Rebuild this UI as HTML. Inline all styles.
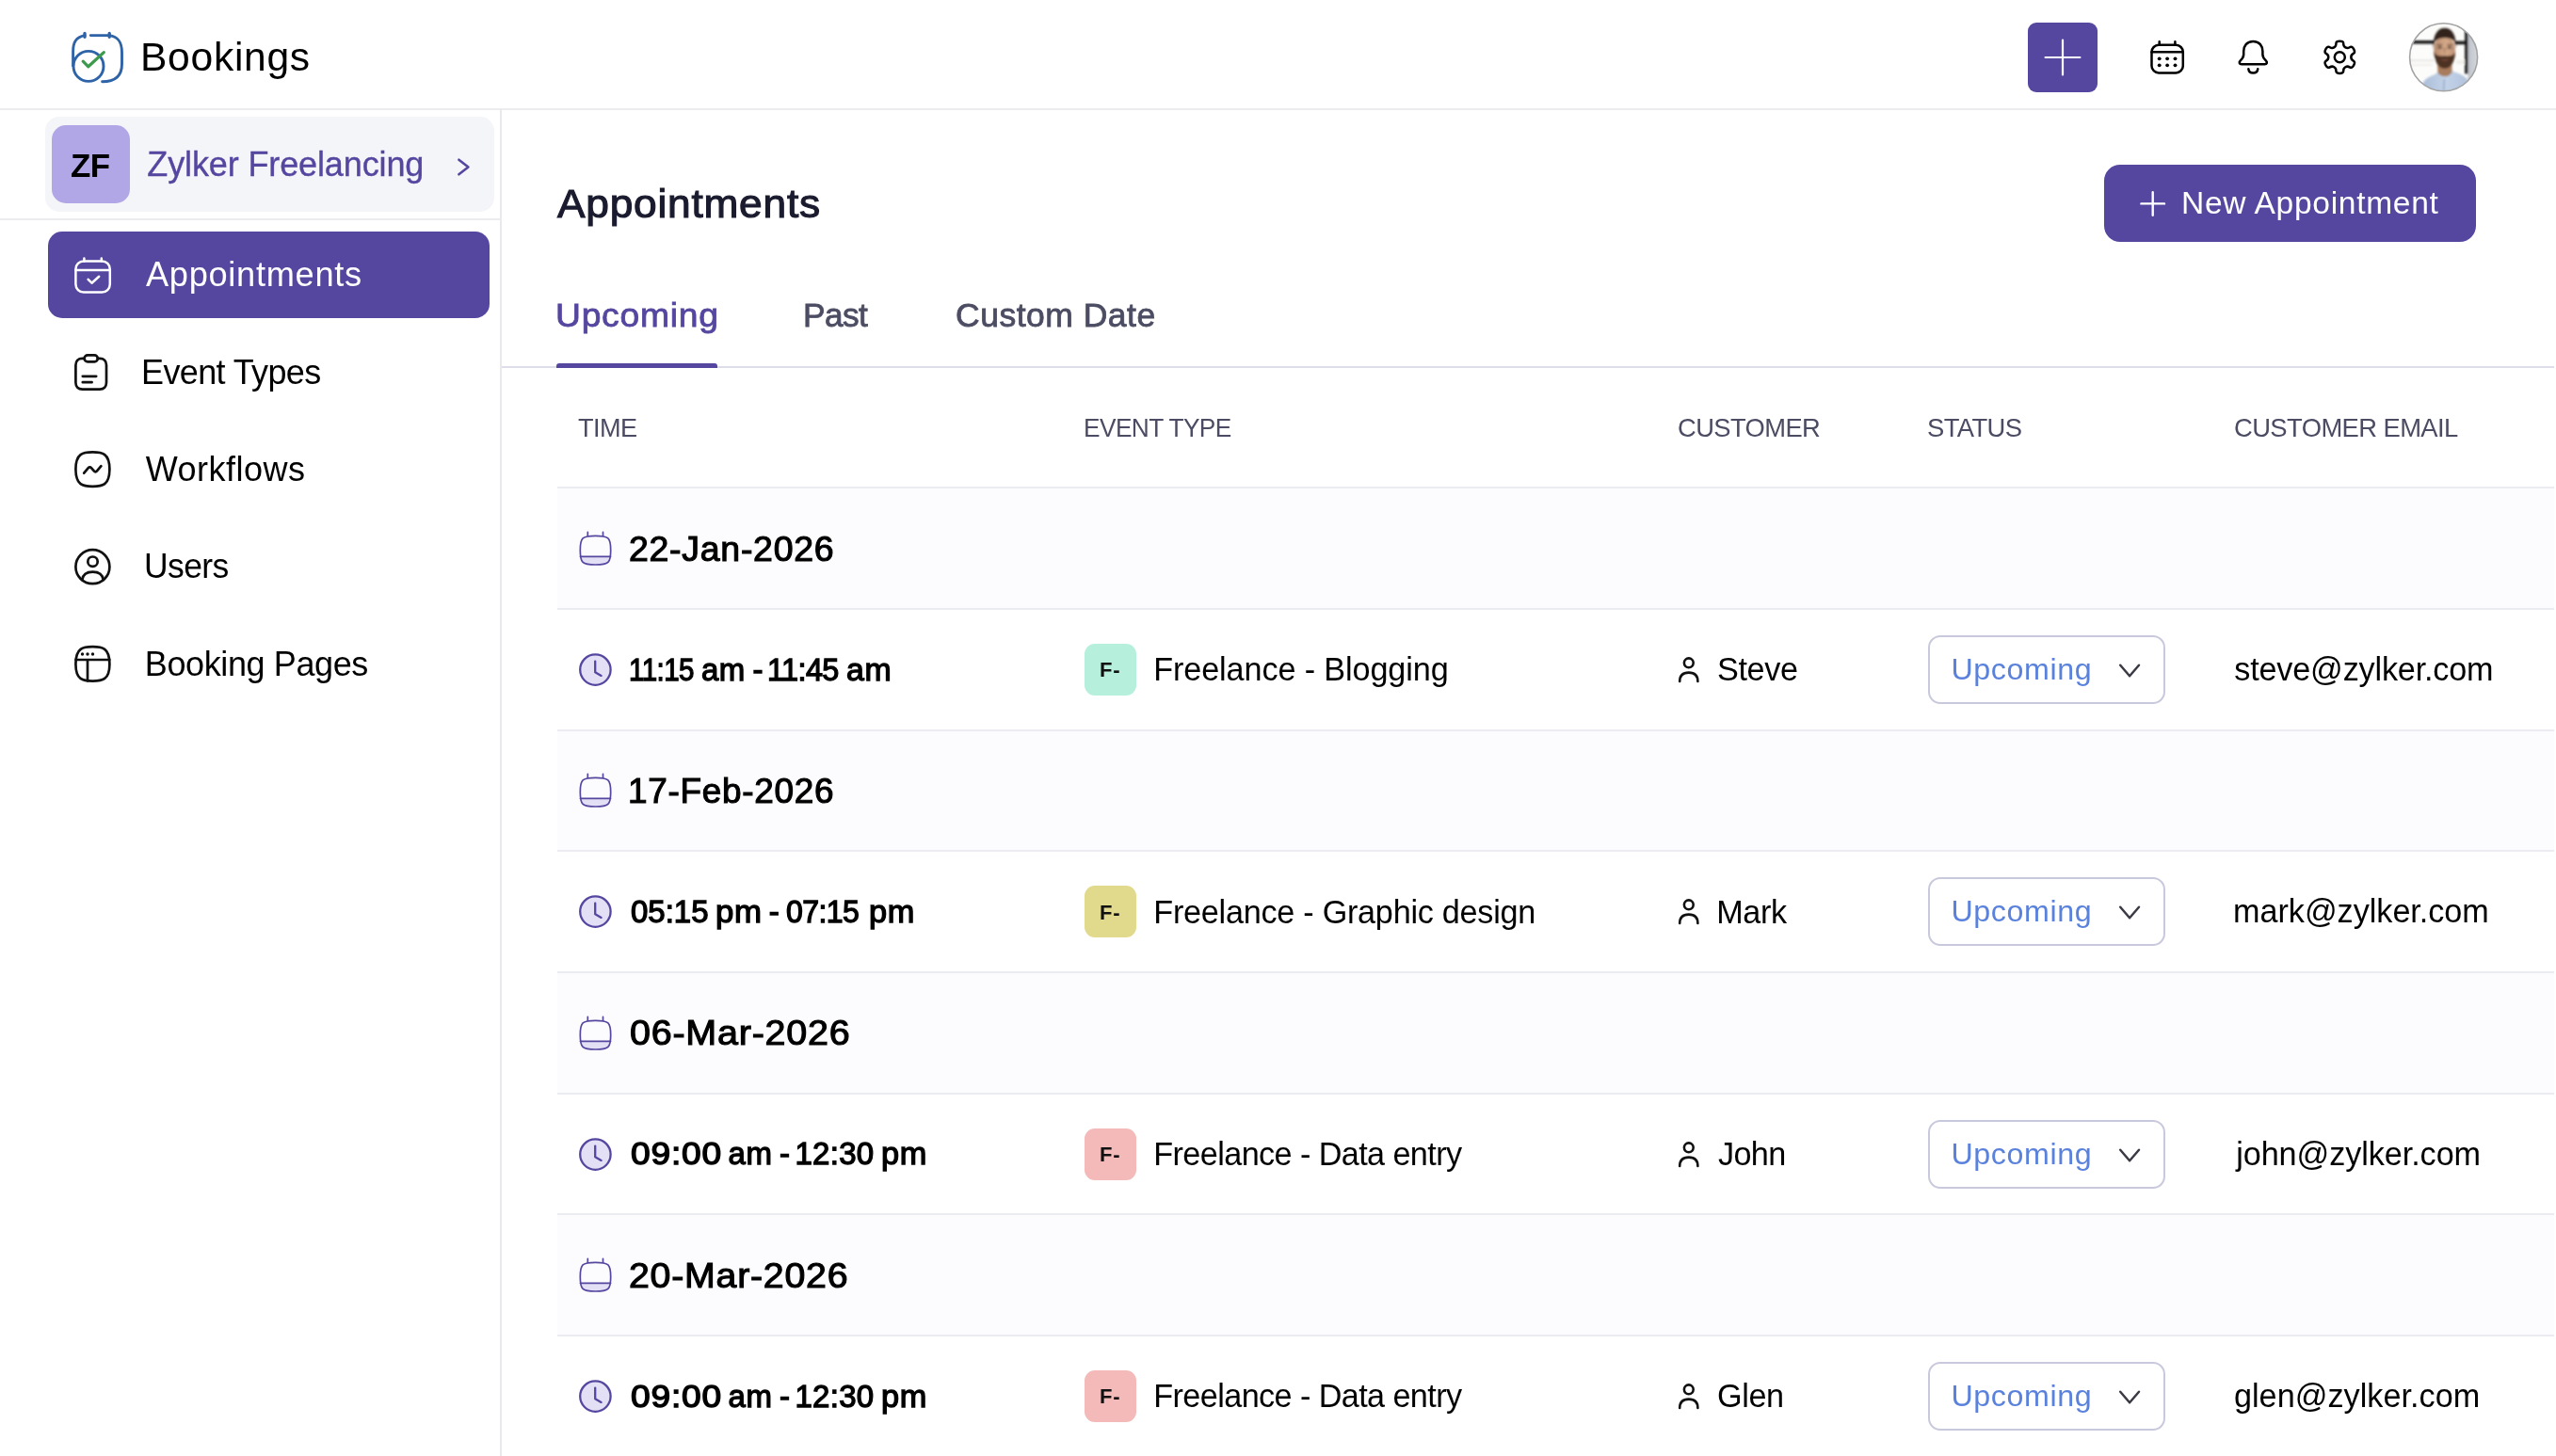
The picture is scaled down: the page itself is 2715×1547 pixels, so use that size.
<!DOCTYPE html><html lang="en"><head><meta charset="utf-8"><title>Bookings - Appointments</title><style>
*{box-sizing:border-box;margin:0;padding:0}
html,body{width:2715px;height:1547px;overflow:hidden;background:#fff}
body{position:relative;font-family:"Liberation Sans",sans-serif;color:#000}
.t{position:absolute;white-space:pre;line-height:1;display:block}
.a{position:absolute;display:block}
.g{position:absolute;left:0;top:0;width:0;height:0}
svg{position:absolute;overflow:visible}
</style></head><body><div id="app" style="position:absolute;left:0;top:0;width:2715px;height:1547px;will-change:transform">
<header class="g">
<div class="a" style="left:0;top:115.200px;width:2715px;height:2px;background:#ececef"></div>
<svg style="left:70px;top:28px" width="68" height="66" viewBox="70 28 68 66" fill="none" stroke-linecap="round" stroke-linejoin="round">
<path d="M90 37.600C80.500 39.500 77.600 45 77.600 55V70" stroke="#2f63a8" stroke-width="2.900"/>
<path d="M96.2 37.6H116.2C126 39 129.5 45 129.5 56V68C129.5 81 122 86.8 108.6 86.8" stroke="#2f63a8" stroke-width="2.900"/>
<path d="M90 35.400V39.300M116.200 35.400V39.300" stroke="#2f63a8" stroke-width="3.400"/>
<circle cx="94" cy="70.400" r="16" stroke="#2f63a8" stroke-width="2.900"/>
<path d="M88.2 65.2L93.8 70.8L110.3 55.6" stroke="#3c9a4c" stroke-width="3.200"/>
</svg>
<span class="t" style="left:149.09px;top:40.05px;font-size:42px;letter-spacing:0.700px;color:#000;transform:scaleX(1.0139);transform-origin:0 0;">Bookings</span>
<div class="a" style="left:2154px;top:24px;width:74px;height:74px;border-radius:9px;background:#5546a0"></div>
<svg style="left:2154px;top:24px" width="74" height="74" viewBox="0 0 74 74" fill="none" stroke="#fff" stroke-width="2.2" stroke-linecap="round"><path d="M37 18.6V55.4M18.6 37H55.4"/></svg>
<svg style="left:2280px;top:40px" width="44" height="44" viewBox="2280 40 44 44" fill="none" stroke="#000" stroke-width="2.5" stroke-linecap="round" stroke-linejoin="round">
<rect x="2285.5" y="47.8" width="33.3" height="29.6" rx="7.5"/>
<path d="M2285.5 55.2H2318.8M2293.7 44.2V47.8M2310.4 44.2V47.8"/>
<g fill="#000" stroke="none"><circle cx="2293.7" cy="62.3" r="1.9"/><circle cx="2302.1" cy="62.3" r="1.9"/><circle cx="2310.5" cy="62.3" r="1.9"/><circle cx="2293.7" cy="69.3" r="1.9"/><circle cx="2302.1" cy="69.3" r="1.9"/><circle cx="2310.5" cy="69.3" r="1.9"/></g>
</svg>
<svg style="left:2372px;top:38px" width="44" height="46" viewBox="2372 38 44 46" fill="none" stroke="#000" stroke-width="2.5" stroke-linecap="round" stroke-linejoin="round">
<path d="M2393.3 44C2386.5 44 2383.2 49 2383.2 54.5V58C2383.2 61 2381.5 62.8 2379.6 64.6C2378 66.2 2378.6 68.2 2381 68.2H2405.6C2408 68.2 2408.6 66.2 2407 64.6C2405.1 62.8 2403.4 61 2403.4 58V54.5C2403.4 49 2400.1 44 2393.3 44Z"/>
<path d="M2388.3 73.2C2388.6 76 2390.6 77.6 2393.3 77.6C2396 77.6 2398 76 2398.3 73.2"/>
</svg>
<svg style="left:2463px;top:38px" width="46" height="46" viewBox="2463 38 46 46" fill="none" stroke="#000" stroke-width="2.5" stroke-linejoin="round">
<path d="M2479.28 50.38Q2481.50 49.10 2481.39 46.38Q2481.28 43.67 2485.30 43.67Q2489.32 43.67 2489.21 46.38Q2489.10 49.10 2491.32 50.38Q2493.53 51.66 2495.83 50.21Q2498.13 48.75 2500.14 52.23Q2502.15 55.71 2499.74 56.98Q2497.33 58.24 2497.33 60.80Q2497.33 63.36 2499.74 64.62Q2502.15 65.89 2500.14 69.37Q2498.13 72.85 2495.83 71.39Q2493.53 69.94 2491.32 71.22Q2489.10 72.50 2489.21 75.22Q2489.32 77.93 2485.30 77.93Q2481.28 77.93 2481.39 75.22Q2481.50 72.50 2479.28 71.22Q2477.07 69.94 2474.77 71.39Q2472.47 72.85 2470.46 69.37Q2468.45 65.89 2470.86 64.62Q2473.27 63.36 2473.27 60.80Q2473.27 58.24 2470.86 56.98Q2468.45 55.71 2470.46 52.23Q2472.47 48.75 2474.77 50.21Q2477.07 51.66 2479.28 50.38Z"/><circle cx="2485.3" cy="60.8" r="5.5"/></svg>
<svg style="left:2558px;top:23px" width="76" height="76" viewBox="2558 23 76 76">
<defs><clipPath id="av"><circle cx="2595.600" cy="60.800" r="36"/></clipPath>
<filter id="bl" x="-20%" y="-20%" width="140%" height="140%"><feGaussianBlur stdDeviation="0.800"/></filter>
<linearGradient id="sk" x1="0" y1="0" x2="1" y2="0"><stop offset="0" stop-color="#b98a6c"/><stop offset="0.550" stop-color="#d3a888"/><stop offset="1" stop-color="#c09274"/></linearGradient>
<linearGradient id="sh" x1="0" y1="0" x2="1" y2="0"><stop offset="0" stop-color="#a9bcd8"/><stop offset="0.500" stop-color="#c3d3e8"/><stop offset="1" stop-color="#aebfda"/></linearGradient>
<linearGradient id="wl" x1="0" y1="0" x2="1" y2="0"><stop offset="0" stop-color="#bfc3ca"/><stop offset="1" stop-color="#dcdfe3"/></linearGradient></defs>
<g clip-path="url(#av)"><rect x="2558" y="23" width="76" height="76" fill="#fcfcfb"/>
<g filter="url(#bl)">
<rect x="2558" y="63" width="28" height="2.500" fill="#ecebe8"/><rect x="2558" y="68" width="26" height="2" fill="#f0efec"/>
<rect x="2609" y="64" width="10" height="4" fill="#f1efe9"/>
<rect x="2621.400" y="23" width="14" height="76" fill="url(#wl)"/>
<rect x="2562" y="43" width="23" height="3.500" fill="#161616"/><rect x="2608" y="43.600" width="12" height="3.600" fill="#161616"/>
<rect x="2618.200" y="31" width="3.300" height="47.500" fill="#121212"/>
<path d="M2571 99L2573 90C2575 84 2580 81.500 2586.500 79L2590 76.500L2604 74.500L2607 76.500C2614 78.500 2620 81 2622.500 88L2625 99Z" fill="url(#sh)"/>
<path d="M2589 69H2604.500V76.500C2602 82.500 2594.500 83 2589.500 77.500Z" fill="#a87b5c"/>
<path d="M2596.500 84L2595.500 99" stroke="#8da2c4" stroke-width="1.200" fill="none"/>
<ellipse cx="2596.600" cy="53.500" rx="11.300" ry="15.800" fill="url(#sk)"/>
<path d="M2584.600 52C2583.800 37 2589.500 29.800 2596.600 29.800C2604.500 29.800 2609.600 37 2608.600 52L2607 44C2604.500 39 2589.500 38.500 2586.300 44.500Z" fill="#30231e"/>
<path d="M2585.300 54C2585.600 65.500 2590 72.800 2596.800 72.800C2603.700 72.800 2607.800 65.500 2608.200 54C2606.500 59.500 2603.500 59.800 2596.800 59.200C2590.500 59.800 2587.300 59.500 2585.300 54Z" fill="#4b3024"/>
<path d="M2592.300 62.300C2595 64 2599 64 2601.500 62.300C2600 65.500 2594 65.500 2592.300 62.300Z" fill="#8c4e48"/>
<ellipse cx="2591.600" cy="50.600" rx="2" ry="1" fill="#4a382f"/><ellipse cx="2601.800" cy="50.600" rx="2" ry="1" fill="#4a382f"/>
<path d="M2588.600 47.800H2594.200M2599.400 47.800H2604.800" stroke="#3b2a22" stroke-width="0.900" fill="none"/>
<path d="M2587 51.500H2606.500" stroke="#7d6a5d" stroke-width="0.700" fill="none" opacity="0.700"/>
<path d="M2596.800 51V57" stroke="#b08262" stroke-width="1.300" fill="none"/>
</g></g>
<circle cx="2595.600" cy="60.800" r="36" fill="none" stroke="#a4a4a4" stroke-width="1.600"/></svg>
</header>
<nav class="g">
<div class="a" style="left:531.100px;top:116px;width:2px;height:1431px;background:#e9e9ed"></div>
<div class="a" style="left:0;top:232.100px;width:532px;height:2px;background:#ececef"></div>
<div class="a" style="left:48px;top:124px;width:477px;height:101px;border-radius:15px;background:#f4f5f9"></div>
<div class="a" style="left:55px;top:133px;width:83px;height:83px;border-radius:15px;background:#b1a6e6"></div>
<span class="t" style="left:75.15px;top:157.57px;font-size:35px;letter-spacing:-0.600px;color:#000;font-weight:700;transform:scaleX(0.9969);transform-origin:0 0;">ZF</span>
<span class="t" style="left:156.29px;top:156.73px;font-size:36px;letter-spacing:-0.119px;color:#5546a0;-webkit-text-stroke:0.35px #5546a0;">Zylker Freelancing</span>
<svg style="left:480px;top:160px" width="26" height="32" viewBox="480 160 26 32" fill="none" stroke="#5546a0" stroke-width="2.6" stroke-linecap="round" stroke-linejoin="round"><path d="M487.400 169.700L497.400 177.500L487.400 185.300"/></svg>
<div class="a" style="left:51px;top:246.200px;width:468.600px;height:91.800px;border-radius:15px;background:#5546a0"></div>
<svg style="left:74px;top:268px" width="50" height="50" viewBox="74 268 50 50" fill="none" stroke="#fff" stroke-width="2.500" stroke-linecap="round" stroke-linejoin="round">
<rect x="80.400" y="277.400" width="36.400" height="33.200" rx="8.500"/><path d="M80.400 287H116.800M89.400 274.400V277.400M107.800 274.400V277.400M93.600 296.800L97.500 300.700L105.200 293.800"/></svg>
<span class="t" style="left:154.82px;top:274.33px;font-size:36px;letter-spacing:0.700px;color:#fff;transform:scaleX(1.0057);transform-origin:0 0;">Appointments</span>
<svg style="left:74px;top:370px" width="50" height="50" viewBox="74 370 50 50" fill="none" stroke="#111" stroke-width="2.7" stroke-linecap="round" stroke-linejoin="round">
<path d="M89.600 380.900H87.400C83.200 380.900 80.400 383.700 80.400 387.900V406.600C80.400 410.800 83.200 413.600 87.400 413.600H106C110.200 413.600 113 410.800 113 406.600V387.900C113 383.700 110.200 380.900 106 380.900H103.800"/>
<rect x="89.600" y="377.400" width="14.200" height="7" rx="3.500"/><path d="M87.800 399.800H102.200M87.800 406.200H97.600"/></svg>
<span class="t" style="left:150.02px;top:377.53px;font-size:36px;letter-spacing:-0.600px;color:#000;transform:scaleX(0.9988);transform-origin:0 0;">Event Types</span>
<svg style="left:74px;top:474px" width="50" height="50" viewBox="74 474 50 50" fill="none" stroke="#111" stroke-width="2.7" stroke-linecap="round" stroke-linejoin="round">
<path d="M98.400 480.400C108.500 480.400 116.400 481.500 116.400 498.600C116.400 515.700 108.500 516.800 98.400 516.800C88.300 516.800 80.400 515.700 80.400 498.600C80.400 481.500 88.300 480.400 98.400 480.400Z"/>
<path d="M89.200 502.600L93.800 497.200C94.800 496 96 496 97 497.200L99.800 500.400C100.800 501.600 102 501.600 103 500.400L107.400 495.200"/></svg>
<span class="t" style="left:154.82px;top:480.93px;font-size:36px;letter-spacing:0.478px;color:#000;">Workflows</span>
<svg style="left:74px;top:578px" width="50" height="50" viewBox="74 578 50 50" fill="none" stroke="#111" stroke-width="2.7" stroke-linecap="round" stroke-linejoin="round">
<circle cx="98.400" cy="602.200" r="18"/><circle cx="98.500" cy="596.700" r="5.200"/>
<path d="M87.200 616.200C88 610.500 92.500 607.600 98.500 607.600C104.500 607.600 109 610.500 109.800 616.200"/></svg>
<span class="t" style="left:152.84px;top:584.33px;font-size:36px;letter-spacing:-0.600px;color:#000;transform:scaleX(0.9852);transform-origin:0 0;">Users</span>
<svg style="left:74px;top:681px" width="50" height="50" viewBox="74 681 50 50" fill="none" stroke="#111" stroke-width="2.7" stroke-linecap="round" stroke-linejoin="round">
<path d="M98.400 687.200C108.500 687.200 116.400 688.300 116.400 705.400C116.400 722.500 108.500 723.600 98.400 723.600C88.300 723.600 80.400 722.500 80.400 705.400C80.400 688.300 88.300 687.200 98.400 687.200Z"/>
<path d="M80.600 701H116.200M93 701V723.400"/><g fill="#111" stroke="none"><circle cx="87.500" cy="695" r="1.700"/><circle cx="93" cy="695" r="1.700"/><circle cx="98.500" cy="695" r="1.700"/></g></svg>
<span class="t" style="left:153.82px;top:687.73px;font-size:36px;letter-spacing:-0.388px;color:#000;">Booking Pages</span>
</nav>
<main class="g">
<span class="t" style="left:592.36px;top:195.85px;font-size:42px;letter-spacing:0.700px;color:#1b1b2f;-webkit-text-stroke:1.1px #1b1b2f;transform:scaleX(1.0551);transform-origin:0 0;">Appointments</span>
<div class="a" style="left:2234.500px;top:174.600px;width:395.600px;height:82.700px;border-radius:17px;background:#5546a0"></div>
<svg style="left:2270px;top:200px" width="34" height="34" viewBox="2270 200 34 34" fill="none" stroke="#fff" stroke-width="2.4" stroke-linecap="round"><path d="M2286.700 204.100V228.700M2274.400 216.400H2299"/></svg>
<span class="t" style="left:2317.11px;top:199.04px;font-size:33.5px;letter-spacing:0.700px;color:#fff;transform:scaleX(1.0021);transform-origin:0 0;">New Appointment</span>
<span class="t" style="left:590.03px;top:318.15px;font-size:35.5px;letter-spacing:0.700px;color:#5546a0;-webkit-text-stroke:0.8px #5546a0;transform:scaleX(1.0494);transform-origin:0 0;">Upcoming</span>
<span class="t" style="left:853.08px;top:318.15px;font-size:35.5px;letter-spacing:-0.600px;color:#4c4c63;-webkit-text-stroke:0.8px #4c4c63;transform:scaleX(0.9928);transform-origin:0 0;">Past</span>
<span class="t" style="left:1015.12px;top:318.15px;font-size:35.5px;letter-spacing:0.493px;color:#4c4c63;-webkit-text-stroke:0.8px #4c4c63;">Custom Date</span>
<div class="a" style="left:533px;top:388.500px;width:2180px;height:2px;background:#dedeea"></div>
<div class="a" style="left:591px;top:386.200px;width:171px;height:4.400px;border-radius:3px 3px 0 0;background:#5546a0"></div>
<span class="t" style="left:614.16px;top:441.02px;font-size:27.5px;letter-spacing:-0.600px;color:#4b4b63;transform:scaleX(0.9865);transform-origin:0 0;">TIME</span>
<span class="t" style="left:1150.50px;top:441.02px;font-size:27.5px;letter-spacing:-0.600px;color:#4b4b63;transform:scaleX(0.9548);transform-origin:0 0;">EVENT TYPE</span>
<span class="t" style="left:1781.53px;top:441.02px;font-size:27.5px;letter-spacing:-0.600px;color:#4b4b63;transform:scaleX(0.9944);transform-origin:0 0;">CUSTOMER</span>
<span class="t" style="left:2047.17px;top:441.02px;font-size:27.5px;letter-spacing:-0.600px;color:#4b4b63;transform:scaleX(0.9971);transform-origin:0 0;">STATUS</span>
<span class="t" style="left:2372.63px;top:441.02px;font-size:27.5px;letter-spacing:-0.600px;color:#4b4b63;transform:scaleX(0.9960);transform-origin:0 0;">CUSTOMER EMAIL</span>
<section class="g">
<div class="a" style="left:592px;top:518.0px;width:2121px;height:128.7px;background:#fcfcfe"></div>
<div class="a" style="left:592px;top:517.2px;width:2121px;height:2px;background:#ebebf2"></div>
<div class="a" style="left:592px;top:645.9px;width:2121px;height:2px;background:#ebebf2"></div>
<svg style="left:612px;top:560.0px" width="42" height="44" viewBox="612 42 42 44" fill="none" stroke="#5546a0" stroke-width="1.7" stroke-linecap="round" stroke-linejoin="round">
<path d="M616.300 73.300H648.700C648.700 80.500 646.500 82 632.500 82C618.500 82 616.300 80.500 616.300 73.300Z" fill="#e3e0f6" stroke="none"/>
<path d="M632.500 51.300C646.500 51.300 648.700 53.300 648.700 66.650C648.700 80 646.500 82 632.500 82C618.500 82 616.300 80 616.300 66.650C616.300 53.300 618.500 51.300 632.500 51.300Z"/><path d="M616.400 73.300H648.600M624.300 47.400V51.300M640.500 47.400V51.300"/></svg>
<span class="t" style="left:668.19px;top:565.60px;font-size:36.5px;letter-spacing:0.700px;color:#000;-webkit-text-stroke:1.1px #000;transform:scaleX(1.0268);transform-origin:0 0;">22-Jan-2026</span>
<svg style="left:612px;top:688.7px" width="42" height="44" viewBox="612 42 42 44" fill="none" stroke="#5546a0" stroke-width="2.300" stroke-linecap="round" stroke-linejoin="round">
<circle cx="632.400" cy="64.600" r="16.200" fill="#e3e0f6"/><path d="M632.200 55.600V67.200L638.600 70.900"/></svg>
<div class="g"><span class="t" style="left:667.67px;top:694.67px;font-size:33px;letter-spacing:-0.600px;color:#000;-webkit-text-stroke:1.3px #000;transform:scaleX(0.8944);transform-origin:0 0;">11:15</span> <span class="t" style="left:744.96px;top:694.67px;font-size:33px;letter-spacing:0.525px;color:#000;-webkit-text-stroke:1.3px #000;">am</span> <span class="t" style="left:799.46px;top:694.67px;font-size:33px;letter-spacing:0.000px;color:#000;-webkit-text-stroke:1.3px #000;">-</span> <span class="t" style="left:814.51px;top:694.67px;font-size:33px;letter-spacing:-0.600px;color:#000;-webkit-text-stroke:1.3px #000;transform:scaleX(0.9823);transform-origin:0 0;">11:45</span> <span class="t" style="left:898.54px;top:694.67px;font-size:33px;letter-spacing:0.700px;color:#000;-webkit-text-stroke:1.3px #000;transform:scaleX(1.0255);transform-origin:0 0;">am</span></div>
<div class="a" style="left:1152px;top:684.0px;width:55px;height:55px;border-radius:11px;background:#b6f0dd"></div>
<span class="t" style="left:1168.37px;top:701.28px;font-size:22px;letter-spacing:0.700px;color:#111;font-weight:700;transform:scaleX(1.0010);transform-origin:0 0;">F-</span>
<span class="t" style="left:1225.26px;top:694.15px;font-size:34.2px;letter-spacing:-0.107px;color:#000;">Freelance - Blogging</span>
<svg style="left:1778px;top:692.7px" width="32" height="36" viewBox="1778 46 32 36" fill="none" stroke="#111" stroke-width="2.600" stroke-linecap="round" stroke-linejoin="round">
<circle cx="1793.800" cy="57.300" r="4.900"/><path d="M1784.200 77C1784.200 70.600 1787.600 67.600 1793.800 67.600C1800 67.600 1803.400 70.600 1803.400 77"/></svg>
<span class="t" style="left:1823.96px;top:694.15px;font-size:34.2px;letter-spacing:-0.351px;color:#000;">Steve</span>
<div class="a" style="left:2048px;top:675.0px;width:252px;height:73px;border-radius:13px;border:2px solid #c9c9dd;background:#fff"></div>
<span class="t" style="left:2072.49px;top:694.74px;font-size:32.2px;letter-spacing:0.615px;color:#5a82dc;">Upcoming</span>
<svg style="left:2246px;top:700.7px" width="32" height="26" viewBox="2246 54 32 26" fill="none" stroke="#3a3a44" stroke-width="2.500" stroke-linecap="round" stroke-linejoin="round"><path d="M2252.200 59.800L2262.100 71.200L2272 59.800"/></svg>
<span class="t" style="left:2373.27px;top:693.95px;font-size:34.2px;letter-spacing:-0.175px;color:#000;">steve@zylker.com</span>
</section>
<section class="g">
<div class="a" style="left:592px;top:775.4px;width:2121px;height:128.7px;background:#fcfcfe"></div>
<div class="a" style="left:592px;top:774.6px;width:2121px;height:2px;background:#ebebf2"></div>
<div class="a" style="left:592px;top:903.3px;width:2121px;height:2px;background:#ebebf2"></div>
<svg style="left:612px;top:817.4px" width="42" height="44" viewBox="612 42 42 44" fill="none" stroke="#5546a0" stroke-width="1.7" stroke-linecap="round" stroke-linejoin="round">
<path d="M616.300 73.300H648.700C648.700 80.500 646.500 82 632.500 82C618.500 82 616.300 80.500 616.300 73.300Z" fill="#e3e0f6" stroke="none"/>
<path d="M632.500 51.300C646.500 51.300 648.700 53.300 648.700 66.650C648.700 80 646.500 82 632.500 82C618.500 82 616.300 80 616.300 66.650C616.300 53.300 618.500 51.300 632.500 51.300Z"/><path d="M616.400 73.300H648.600M624.300 47.400V51.300M640.500 47.400V51.300"/></svg>
<span class="t" style="left:667.29px;top:823.00px;font-size:36.5px;letter-spacing:0.700px;color:#000;-webkit-text-stroke:1.1px #000;transform:scaleX(1.0118);transform-origin:0 0;">17-Feb-2026</span>
<svg style="left:612px;top:946.1px" width="42" height="44" viewBox="612 42 42 44" fill="none" stroke="#5546a0" stroke-width="2.300" stroke-linecap="round" stroke-linejoin="round">
<circle cx="632.400" cy="64.600" r="16.200" fill="#e3e0f6"/><path d="M632.200 55.600V67.200L638.600 70.900"/></svg>
<div class="g"><span class="t" style="left:669.93px;top:952.07px;font-size:33px;letter-spacing:0.010px;color:#000;-webkit-text-stroke:1.3px #000;">05:15</span> <span class="t" style="left:760.22px;top:952.07px;font-size:33px;letter-spacing:0.700px;color:#000;-webkit-text-stroke:1.3px #000;transform:scaleX(1.0549);transform-origin:0 0;">pm</span> <span class="t" style="left:816.76px;top:952.07px;font-size:33px;letter-spacing:0.000px;color:#000;-webkit-text-stroke:1.3px #000;">-</span> <span class="t" style="left:834.95px;top:952.07px;font-size:33px;letter-spacing:-0.600px;color:#000;-webkit-text-stroke:1.3px #000;transform:scaleX(0.9713);transform-origin:0 0;">07:15</span> <span class="t" style="left:923.14px;top:952.07px;font-size:33px;letter-spacing:0.700px;color:#000;-webkit-text-stroke:1.3px #000;transform:scaleX(1.0411);transform-origin:0 0;">pm</span></div>
<div class="a" style="left:1152px;top:941.4px;width:55px;height:55px;border-radius:11px;background:#e1d98c"></div>
<span class="t" style="left:1168.37px;top:958.68px;font-size:22px;letter-spacing:0.700px;color:#111;font-weight:700;transform:scaleX(1.0010);transform-origin:0 0;">F-</span>
<span class="t" style="left:1225.26px;top:951.55px;font-size:34.2px;letter-spacing:-0.252px;color:#000;">Freelance - Graphic design</span>
<svg style="left:1778px;top:950.1px" width="32" height="36" viewBox="1778 46 32 36" fill="none" stroke="#111" stroke-width="2.600" stroke-linecap="round" stroke-linejoin="round">
<circle cx="1793.800" cy="57.300" r="4.900"/><path d="M1784.200 77C1784.200 70.600 1787.600 67.600 1793.800 67.600C1800 67.600 1803.400 70.600 1803.400 77"/></svg>
<span class="t" style="left:1823.26px;top:951.55px;font-size:34.2px;letter-spacing:-0.396px;color:#000;">Mark</span>
<div class="a" style="left:2048px;top:932.4px;width:252px;height:73px;border-radius:13px;border:2px solid #c9c9dd;background:#fff"></div>
<span class="t" style="left:2072.49px;top:952.14px;font-size:32.2px;letter-spacing:0.615px;color:#5a82dc;">Upcoming</span>
<svg style="left:2246px;top:958.1px" width="32" height="26" viewBox="2246 54 32 26" fill="none" stroke="#3a3a44" stroke-width="2.500" stroke-linecap="round" stroke-linejoin="round"><path d="M2252.200 59.800L2262.100 71.200L2272 59.800"/></svg>
<span class="t" style="left:2372.08px;top:951.35px;font-size:34.2px;letter-spacing:-0.028px;color:#000;">mark@zylker.com</span>
</section>
<section class="g">
<div class="a" style="left:592px;top:1032.8px;width:2121px;height:128.7px;background:#fcfcfe"></div>
<div class="a" style="left:592px;top:1032.0px;width:2121px;height:2px;background:#ebebf2"></div>
<div class="a" style="left:592px;top:1160.7px;width:2121px;height:2px;background:#ebebf2"></div>
<svg style="left:612px;top:1074.8px" width="42" height="44" viewBox="612 42 42 44" fill="none" stroke="#5546a0" stroke-width="1.7" stroke-linecap="round" stroke-linejoin="round">
<path d="M616.300 73.300H648.700C648.700 80.500 646.500 82 632.500 82C618.500 82 616.300 80.500 616.300 73.300Z" fill="#e3e0f6" stroke="none"/>
<path d="M632.500 51.300C646.500 51.300 648.700 53.300 648.700 66.650C648.700 80 646.500 82 632.500 82C618.500 82 616.300 80 616.300 66.650C616.300 53.300 618.500 51.300 632.500 51.300Z"/><path d="M616.400 73.300H648.600M624.300 47.400V51.300M640.500 47.400V51.300"/></svg>
<span class="t" style="left:668.52px;top:1080.40px;font-size:36.5px;letter-spacing:0.700px;color:#000;-webkit-text-stroke:1.1px #000;transform:scaleX(1.0820);transform-origin:0 0;">06-Mar-2026</span>
<svg style="left:612px;top:1203.5px" width="42" height="44" viewBox="612 42 42 44" fill="none" stroke="#5546a0" stroke-width="2.300" stroke-linecap="round" stroke-linejoin="round">
<circle cx="632.400" cy="64.600" r="16.200" fill="#e3e0f6"/><path d="M632.200 55.600V67.200L638.600 70.900"/></svg>
<div class="g"><span class="t" style="left:669.85px;top:1209.47px;font-size:33px;letter-spacing:0.700px;color:#000;-webkit-text-stroke:1.3px #000;transform:scaleX(1.1255);transform-origin:0 0;">09:00</span> <span class="t" style="left:773.56px;top:1209.47px;font-size:33px;letter-spacing:0.525px;color:#000;-webkit-text-stroke:1.3px #000;">am</span> <span class="t" style="left:828.06px;top:1209.47px;font-size:33px;letter-spacing:0.000px;color:#000;-webkit-text-stroke:1.3px #000;">-</span> <span class="t" style="left:844.38px;top:1209.47px;font-size:33px;letter-spacing:0.299px;color:#000;-webkit-text-stroke:1.3px #000;">12:30</span> <span class="t" style="left:936.44px;top:1209.47px;font-size:33px;letter-spacing:0.700px;color:#000;-webkit-text-stroke:1.3px #000;transform:scaleX(1.0411);transform-origin:0 0;">pm</span></div>
<div class="a" style="left:1152px;top:1198.8px;width:55px;height:55px;border-radius:11px;background:#f4b9b9"></div>
<span class="t" style="left:1168.37px;top:1216.08px;font-size:22px;letter-spacing:0.700px;color:#111;font-weight:700;transform:scaleX(1.0010);transform-origin:0 0;">F-</span>
<span class="t" style="left:1225.26px;top:1208.95px;font-size:34.2px;letter-spacing:-0.585px;color:#000;">Freelance - Data entry</span>
<svg style="left:1778px;top:1207.5px" width="32" height="36" viewBox="1778 46 32 36" fill="none" stroke="#111" stroke-width="2.600" stroke-linecap="round" stroke-linejoin="round">
<circle cx="1793.800" cy="57.300" r="4.900"/><path d="M1784.200 77C1784.200 70.600 1787.600 67.600 1793.800 67.600C1800 67.600 1803.400 70.600 1803.400 77"/></svg>
<span class="t" style="left:1824.89px;top:1208.95px;font-size:34.2px;letter-spacing:-0.569px;color:#000;">John</span>
<div class="a" style="left:2048px;top:1189.8px;width:252px;height:73px;border-radius:13px;border:2px solid #c9c9dd;background:#fff"></div>
<span class="t" style="left:2072.49px;top:1209.54px;font-size:32.2px;letter-spacing:0.615px;color:#5a82dc;">Upcoming</span>
<svg style="left:2246px;top:1215.5px" width="32" height="26" viewBox="2246 54 32 26" fill="none" stroke="#3a3a44" stroke-width="2.500" stroke-linecap="round" stroke-linejoin="round"><path d="M2252.200 59.800L2262.100 71.200L2272 59.800"/></svg>
<span class="t" style="left:2375.16px;top:1208.75px;font-size:34.2px;letter-spacing:-0.065px;color:#000;">john@zylker.com</span>
</section>
<section class="g">
<div class="a" style="left:592px;top:1290.2px;width:2121px;height:128.7px;background:#fcfcfe"></div>
<div class="a" style="left:592px;top:1289.4px;width:2121px;height:2px;background:#ebebf2"></div>
<div class="a" style="left:592px;top:1418.1px;width:2121px;height:2px;background:#ebebf2"></div>
<svg style="left:612px;top:1332.2px" width="42" height="44" viewBox="612 42 42 44" fill="none" stroke="#5546a0" stroke-width="1.7" stroke-linecap="round" stroke-linejoin="round">
<path d="M616.300 73.300H648.700C648.700 80.500 646.500 82 632.500 82C618.500 82 616.300 80.500 616.300 73.300Z" fill="#e3e0f6" stroke="none"/>
<path d="M632.500 51.300C646.500 51.300 648.700 53.300 648.700 66.650C648.700 80 646.500 82 632.500 82C618.500 82 616.300 80 616.300 66.650C616.300 53.300 618.500 51.300 632.500 51.300Z"/><path d="M616.400 73.300H648.600M624.300 47.400V51.300M640.500 47.400V51.300"/></svg>
<span class="t" style="left:668.13px;top:1337.80px;font-size:36.5px;letter-spacing:0.700px;color:#000;-webkit-text-stroke:1.1px #000;transform:scaleX(1.0768);transform-origin:0 0;">20-Mar-2026</span>
<svg style="left:612px;top:1460.9px" width="42" height="44" viewBox="612 42 42 44" fill="none" stroke="#5546a0" stroke-width="2.300" stroke-linecap="round" stroke-linejoin="round">
<circle cx="632.400" cy="64.600" r="16.200" fill="#e3e0f6"/><path d="M632.200 55.600V67.200L638.600 70.900"/></svg>
<div class="g"><span class="t" style="left:669.85px;top:1466.87px;font-size:33px;letter-spacing:0.700px;color:#000;-webkit-text-stroke:1.3px #000;transform:scaleX(1.1255);transform-origin:0 0;">09:00</span> <span class="t" style="left:773.56px;top:1466.87px;font-size:33px;letter-spacing:0.525px;color:#000;-webkit-text-stroke:1.3px #000;">am</span> <span class="t" style="left:828.06px;top:1466.87px;font-size:33px;letter-spacing:0.000px;color:#000;-webkit-text-stroke:1.3px #000;">-</span> <span class="t" style="left:844.38px;top:1466.87px;font-size:33px;letter-spacing:0.299px;color:#000;-webkit-text-stroke:1.3px #000;">12:30</span> <span class="t" style="left:936.44px;top:1466.87px;font-size:33px;letter-spacing:0.700px;color:#000;-webkit-text-stroke:1.3px #000;transform:scaleX(1.0411);transform-origin:0 0;">pm</span></div>
<div class="a" style="left:1152px;top:1456.2px;width:55px;height:55px;border-radius:11px;background:#f4b9b9"></div>
<span class="t" style="left:1168.37px;top:1473.48px;font-size:22px;letter-spacing:0.700px;color:#111;font-weight:700;transform:scaleX(1.0010);transform-origin:0 0;">F-</span>
<span class="t" style="left:1225.26px;top:1466.35px;font-size:34.2px;letter-spacing:-0.585px;color:#000;">Freelance - Data entry</span>
<svg style="left:1778px;top:1464.9px" width="32" height="36" viewBox="1778 46 32 36" fill="none" stroke="#111" stroke-width="2.600" stroke-linecap="round" stroke-linejoin="round">
<circle cx="1793.800" cy="57.300" r="4.900"/><path d="M1784.200 77C1784.200 70.600 1787.600 67.600 1793.800 67.600C1800 67.600 1803.400 70.600 1803.400 77"/></svg>
<span class="t" style="left:1824.09px;top:1466.35px;font-size:34.2px;letter-spacing:-0.410px;color:#000;">Glen</span>
<div class="a" style="left:2048px;top:1447.2px;width:252px;height:73px;border-radius:13px;border:2px solid #c9c9dd;background:#fff"></div>
<span class="t" style="left:2072.49px;top:1466.94px;font-size:32.2px;letter-spacing:0.615px;color:#5a82dc;">Upcoming</span>
<svg style="left:2246px;top:1472.9px" width="32" height="26" viewBox="2246 54 32 26" fill="none" stroke="#3a3a44" stroke-width="2.500" stroke-linecap="round" stroke-linejoin="round"><path d="M2252.200 59.800L2262.100 71.200L2272 59.800"/></svg>
<span class="t" style="left:2372.93px;top:1466.15px;font-size:34.2px;letter-spacing:0.030px;color:#000;">glen@zylker.com</span>
</section>
<div class="a" style="left:592px;top:1546.8px;width:2121px;height:2px;background:#ebebf2"></div>
</main>
</div></body></html>
